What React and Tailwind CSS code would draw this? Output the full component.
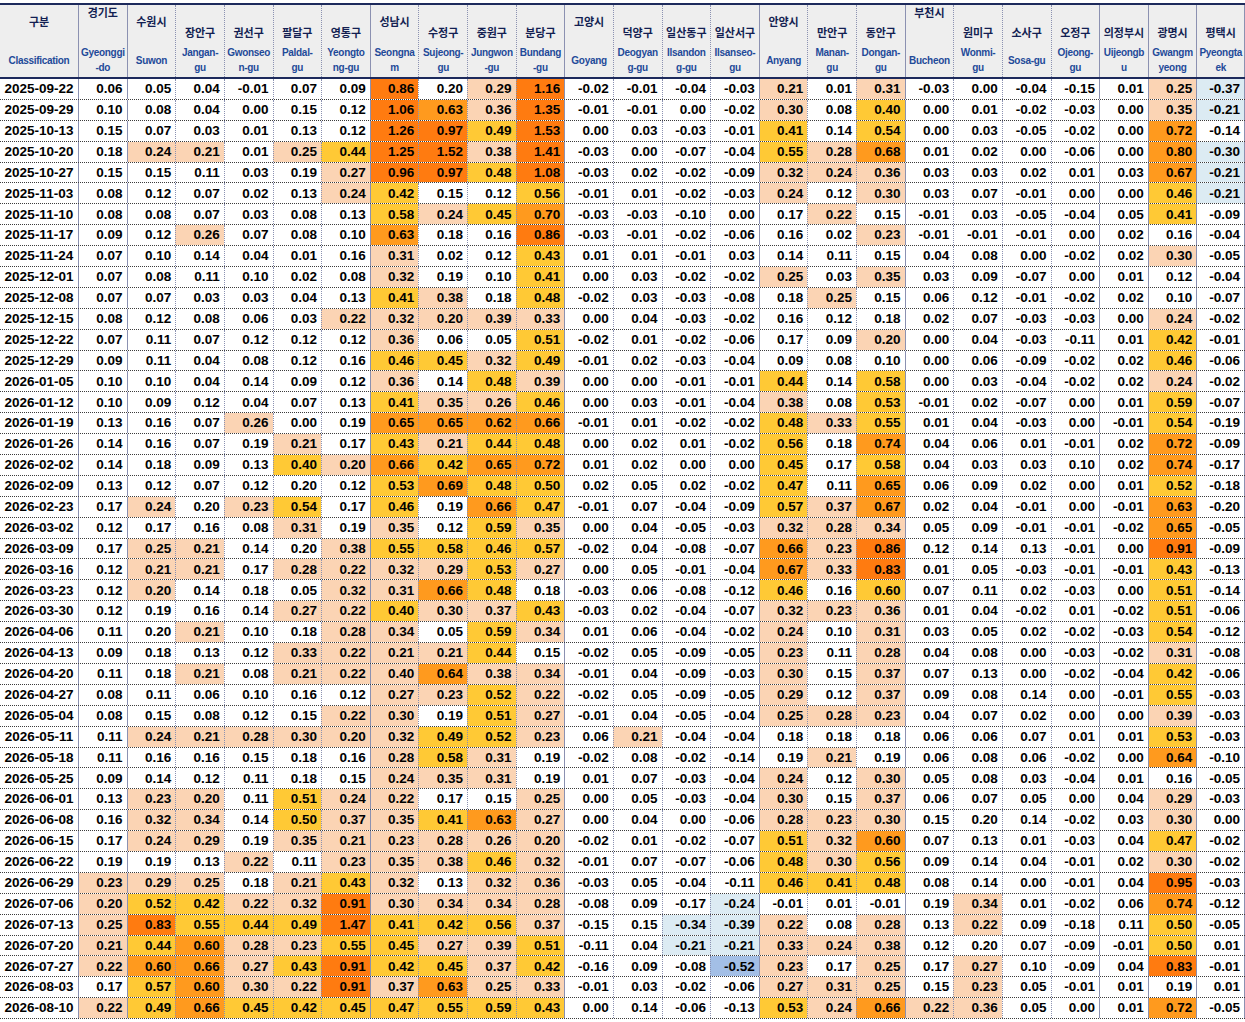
import clsx from 'clsx'

// header: Korean name, English lines, and where the Korean name sits (a = top, b = middle, c = low)
const COLS = [
  { k: '경기도', e: ['Gyeonggi', '-do'], t: 'a', city: true },
  { k: '수원시', e: ['Suwon'], t: 'b', city: true },
  { k: '장안구', e: ['Jangan-', 'gu'], t: 'c' },
  { k: '권선구', e: ['Gwonseo', 'n-gu'], t: 'c' },
  { k: '팔달구', e: ['Paldal-', 'gu'], t: 'c' },
  { k: '영통구', e: ['Yeongto', 'ng-gu'], t: 'c' },
  { k: '성남시', e: ['Seongna', 'm'], t: 'b', city: true },
  { k: '수정구', e: ['Sujeong-', 'gu'], t: 'c' },
  { k: '중원구', e: ['Jungwon', '-gu'], t: 'c' },
  { k: '분당구', e: ['Bundang', '-gu'], t: 'c' },
  { k: '고양시', e: ['Goyang'], t: 'b', city: true },
  { k: '덕양구', e: ['Deogyan', 'g-gu'], t: 'c' },
  { k: '일산동구', e: ['Ilsandon', 'g-gu'], t: 'c' },
  { k: '일산서구', e: ['Ilsanseo-', 'gu'], t: 'c' },
  { k: '안양시', e: ['Anyang'], t: 'b', city: true },
  { k: '만안구', e: ['Manan-', 'gu'], t: 'c' },
  { k: '동안구', e: ['Dongan-', 'gu'], t: 'c' },
  { k: '부천시', e: ['Bucheon'], t: 'a', city: true },
  { k: '원미구', e: ['Wonmi-', 'gu'], t: 'c' },
  { k: '소사구', e: ['Sosa-gu'], t: 'c' },
  { k: '오정구', e: ['Ojeong-', 'gu'], t: 'c' },
  { k: '의정부시', e: ['Uijeongb', 'u'], t: 'c', city: true },
  { k: '광명시', e: ['Gwangm', 'yeong'], t: 'c', city: true },
  { k: '평택시', e: ['Pyeongta', 'ek'], t: 'c', city: true },
]

const KTOP = { a: 'mt-[1px]', b: 'mt-[10px]', c: 'mt-[21px]' }

// "^" marks a cell that the sheet coloured one step lighter than its rounded value says
const ROWS = [
  ['2025-09-22', '0.06 0.05 0.04 -0.01 0.07 0.09 0.86 0.20^ 0.29 1.16 -0.02 -0.01 -0.04 -0.03 0.21 0.01 0.31 -0.03 0.00 -0.04 -0.15 0.01 0.25 -0.37'],
  ['2025-09-29', '0.10 0.08 0.04 0.00 0.15 0.12 1.06 0.63 0.36 1.35 -0.01 -0.01 0.00 -0.02 0.30 0.08 0.40 0.00 0.01 -0.02 -0.03 0.00 0.35 -0.21'],
  ['2025-10-13', '0.15 0.07 0.03 0.01 0.13 0.12 1.26 0.97 0.49 1.53 0.00 0.03 -0.03 -0.01 0.41 0.14 0.54 0.00 0.03 -0.05 -0.02 0.00 0.72 -0.14'],
  ['2025-10-20', '0.18 0.24 0.21 0.01 0.25 0.44 1.25 1.52 0.38 1.41 -0.03 0.00 -0.07 -0.04 0.55 0.28 0.68 0.01 0.02 0.00 -0.06 0.00 0.80^ -0.30'],
  ['2025-10-27', '0.15 0.15 0.11 0.03 0.19 0.27 0.96 0.97 0.48 1.08 -0.03 0.02 -0.02 -0.09 0.32 0.24 0.36 0.03 0.03 0.02 0.01 0.03 0.67 -0.21'],
  ['2025-11-03', '0.08 0.12 0.07 0.02 0.13 0.24 0.42 0.15 0.12 0.56 -0.01 0.01 -0.02 -0.03 0.24 0.12 0.30 0.03 0.07 -0.01 0.00 0.00 0.46 -0.21'],
  ['2025-11-10', '0.08 0.08 0.07 0.03 0.08 0.13 0.58 0.24 0.45 0.70 -0.03 -0.03 -0.10 0.00 0.17 0.22 0.15 -0.01 0.03 -0.05 -0.04 0.05 0.41 -0.09'],
  ['2025-11-17', '0.09 0.12 0.26 0.07 0.08 0.10 0.63 0.18 0.16 0.86 -0.03 -0.01 -0.02 -0.06 0.16 0.02 0.23 -0.01 -0.01 -0.01 0.00 0.02 0.16 -0.04'],
  ['2025-11-24', '0.07 0.10 0.14 0.04 0.01 0.16 0.31 0.02 0.12 0.43 0.01 0.01 -0.01 0.03 0.14 0.11 0.15 0.04 0.08 0.00 -0.02 0.02 0.30 -0.05'],
  ['2025-12-01', '0.07 0.08 0.11 0.10 0.02 0.08 0.32 0.19 0.10 0.41 0.00 0.03 -0.02 -0.02 0.25 0.03 0.35 0.03 0.09 -0.07 0.00 0.01 0.12 -0.04'],
  ['2025-12-08', '0.07 0.07 0.03 0.03 0.04 0.13 0.41 0.38 0.18 0.48 -0.02 0.03 -0.03 -0.08 0.18 0.25 0.15 0.06 0.12 -0.01 -0.02 0.02 0.10 -0.07'],
  ['2025-12-15', '0.08 0.12 0.08 0.06 0.03 0.22 0.32 0.20 0.39 0.33 0.00 0.04 -0.03 -0.02 0.16 0.12 0.18 0.02 0.07 -0.03 -0.03 0.00 0.24 -0.02'],
  ['2025-12-22', '0.07 0.11 0.07 0.12 0.12 0.12 0.36 0.06 0.05 0.51 -0.02 0.01 -0.02 -0.06 0.17 0.09 0.20 0.00 0.04 -0.03 -0.11 0.01 0.42 -0.01'],
  ['2025-12-29', '0.09 0.11 0.04 0.08 0.12 0.16 0.46 0.45 0.32 0.49 -0.01 0.02 -0.03 -0.04 0.09 0.08 0.10 0.00 0.06 -0.09 -0.02 0.02 0.46 -0.06'],
  ['2026-01-05', '0.10 0.10 0.04 0.14 0.09 0.12 0.36 0.14 0.48 0.39 0.00 0.00 -0.01 -0.01 0.44 0.14 0.58 0.00 0.03 -0.04 -0.02 0.02 0.24 -0.02'],
  ['2026-01-12', '0.10 0.09 0.12 0.04 0.07 0.13 0.41 0.35 0.26 0.46 0.00 0.03 -0.01 -0.04 0.38 0.08 0.53 -0.01 0.02 -0.07 0.00 0.01 0.59 -0.07'],
  ['2026-01-19', '0.13 0.16 0.07 0.26 0.00 0.19 0.65 0.65 0.62 0.66 -0.01 0.01 -0.02 -0.02 0.48 0.33 0.55 0.01 0.04 -0.03 0.00 -0.01 0.54 -0.19'],
  ['2026-01-26', '0.14 0.16 0.07 0.19 0.21 0.17 0.43 0.21 0.44 0.48 0.00 0.02 0.01 -0.02 0.56 0.18 0.74 0.04 0.06 0.01 -0.01 0.02 0.72 -0.09'],
  ['2026-02-02', '0.14 0.18 0.09 0.13 0.40 0.20 0.66 0.42 0.65 0.72 0.01 0.02 0.00 0.00 0.45 0.17 0.58 0.04 0.03 0.03 0.10 0.02 0.74 -0.17'],
  ['2026-02-09', '0.13 0.12 0.07 0.12 0.20^ 0.12 0.53 0.69 0.48 0.50 0.02 0.05 0.02 -0.02 0.47 0.11 0.65 0.06 0.09 0.02 0.00 0.01 0.52 -0.18'],
  ['2026-02-23', '0.17 0.24 0.20^ 0.23 0.54 0.17 0.46 0.19 0.66 0.47 -0.01 0.07 -0.04 -0.09 0.57 0.37 0.67 0.02 0.04 -0.01 0.00 -0.01 0.63 -0.20'],
  ['2026-03-02', '0.12 0.17 0.16 0.08 0.31 0.19 0.35 0.12 0.59 0.35 0.00 0.04 -0.05 -0.03 0.32 0.28 0.34 0.05 0.09 -0.01 -0.01 -0.02 0.65 -0.05'],
  ['2026-03-09', '0.17 0.25 0.21 0.14 0.20^ 0.38 0.55 0.58 0.46 0.57 -0.02 0.04 -0.08 -0.07 0.66 0.23 0.86 0.12 0.14 0.13 -0.01 0.00 0.91 -0.09'],
  ['2026-03-16', '0.12 0.21 0.21 0.17 0.28 0.22 0.32 0.29 0.53 0.27 0.00 0.05 -0.01 -0.04 0.67 0.33 0.83 0.01 0.05 -0.03 -0.01 -0.01 0.43 -0.13'],
  ['2026-03-23', '0.12 0.20 0.14 0.18 0.05 0.32 0.31 0.66 0.48 0.18 -0.03 0.06 -0.08 -0.12 0.46 0.16 0.60^ 0.07 0.11 0.02 -0.03 0.00 0.51 -0.14'],
  ['2026-03-30', '0.12 0.19 0.16 0.14 0.27 0.22 0.40 0.30 0.37 0.43 -0.03 0.02 -0.04 -0.07 0.32 0.23 0.36 0.01 0.04 -0.02 0.01 -0.02 0.51 -0.06'],
  ['2026-04-06', '0.11 0.20^ 0.21 0.10 0.18 0.28 0.34 0.05 0.59 0.34 0.01 0.06 -0.04 -0.02 0.24 0.10 0.31 0.03 0.05 0.02 -0.02 -0.03 0.54 -0.12'],
  ['2026-04-13', '0.09 0.18 0.13 0.12 0.33 0.22 0.21 0.21 0.44 0.15 -0.02 0.05 -0.09 -0.05 0.23 0.11 0.28 0.04 0.08 0.00 -0.03 -0.02 0.31 -0.08'],
  ['2026-04-20', '0.11 0.18 0.21 0.08 0.21 0.22 0.40^ 0.64 0.38 0.34 -0.01 0.04 -0.09 -0.03 0.30 0.15 0.37 0.07 0.13 0.00 -0.02 -0.04 0.42 -0.06'],
  ['2026-04-27', '0.08 0.11 0.06 0.10 0.16 0.12 0.27 0.23 0.52 0.22 -0.02 0.05 -0.09 -0.05 0.29 0.12 0.37 0.09 0.08 0.14 0.00 -0.01 0.55 -0.03'],
  ['2026-05-04', '0.08 0.15 0.08 0.12 0.15 0.22 0.30 0.19 0.51 0.27 -0.01 0.04 -0.05 -0.04 0.25 0.28 0.23 0.04 0.07 0.02 0.00 0.00 0.39 -0.03'],
  ['2026-05-11', '0.11 0.24 0.21 0.28 0.30 0.20 0.32 0.49 0.52 0.23 0.06 0.21 -0.04 -0.04 0.18 0.18 0.18 0.06 0.06 0.07 0.01 0.01 0.53 -0.03'],
  ['2026-05-18', '0.11 0.16 0.16 0.15 0.18 0.16 0.28 0.58 0.31 0.19 -0.02 0.08 -0.02 -0.14 0.19 0.21 0.19 0.06 0.08 0.06 -0.02 0.00 0.64 -0.10'],
  ['2026-05-25', '0.09 0.14 0.12 0.11 0.18 0.15 0.24 0.35 0.31 0.19 0.01 0.07 -0.03 -0.04 0.24 0.12 0.30 0.05 0.08 0.03 -0.04 0.01 0.16 -0.05'],
  ['2026-06-01', '0.13 0.23 0.20 0.11 0.51 0.24 0.22 0.17 0.15 0.25 0.00 0.05 -0.03 -0.04 0.30 0.15 0.37 0.06 0.07 0.05 0.00 0.04 0.29 -0.03'],
  ['2026-06-08', '0.16 0.32 0.34 0.14 0.50 0.37 0.35 0.41 0.63 0.27 0.00 0.04 0.00 -0.06 0.28 0.23 0.30 0.15 0.20^ 0.14 -0.02 0.03 0.30 0.00'],
  ['2026-06-15', '0.17 0.24 0.29 0.19 0.35 0.21 0.23 0.28 0.26 0.20 -0.02 0.01 -0.02 -0.07 0.51 0.32 0.60 0.07 0.13 0.01 -0.03 0.04 0.47 -0.02'],
  ['2026-06-22', '0.19 0.19 0.13 0.22 0.11 0.23 0.35 0.38 0.46 0.32 -0.01 0.07 -0.07 -0.06 0.48 0.30 0.56 0.09 0.14 0.04 -0.01 0.02 0.30 -0.02'],
  ['2026-06-29', '0.23 0.29 0.25 0.18 0.21 0.43 0.32 0.13 0.32 0.36 -0.03 0.05 -0.04 -0.11 0.46 0.41 0.48 0.08 0.14 0.00 -0.01 0.04 0.95 -0.03'],
  ['2026-07-06', '0.20 0.52 0.42 0.22 0.32 0.91 0.30 0.34 0.34 0.28 -0.08 0.09 -0.17 -0.24 -0.01 0.01 -0.01 0.19 0.34 0.01 -0.02 0.06 0.74 -0.12'],
  ['2026-07-13', '0.25 0.83 0.55 0.44 0.49 1.47 0.41 0.42 0.56 0.37 -0.15 0.15 -0.34 -0.39 0.22 0.08 0.28 0.13 0.22 0.09 -0.18 0.11 0.50 -0.05'],
  ['2026-07-20', '0.21 0.44 0.60 0.28 0.23 0.55 0.45 0.27 0.39 0.51 -0.11 0.04 -0.21 -0.21 0.33 0.24 0.38 0.12 0.20^ 0.07 -0.09 -0.01 0.50 0.01'],
  ['2026-07-27', '0.22 0.60 0.66 0.27 0.43 0.91 0.42 0.45 0.37 0.42 -0.16 0.09 -0.08 -0.52 0.23 0.17 0.25 0.17 0.27 0.10 -0.09 0.04 0.83 -0.01'],
  ['2026-08-03', '0.17 0.57 0.60 0.30 0.22 0.91 0.37 0.63 0.25 0.33 -0.01 0.03 -0.02 -0.06 0.27 0.31 0.25 0.15 0.23 0.05 -0.01 0.01 0.19 0.01'],
  ['2026-08-10', '0.22 0.49 0.66 0.45 0.42 0.45 0.47 0.55 0.59 0.43 0.00 0.14 -0.06 -0.13 0.53 0.24 0.66 0.22 0.36 0.05 0.00 0.01 0.72 -0.05'],
]

const FILL = {
  '-2': 'bg-[#a3bfe6]',
  '-1': 'bg-[#dcebf3]',
  0: 'bg-white',
  1: 'bg-[#fbd4b4]',
  2: 'bg-[#ffc935]',
  3: 'bg-[#ff9a1e]',
  4: 'bg-[#ff7b10]',
}

function level(s) {
  const v = parseFloat(s)
  if (v <= -0.45) return -2
  if (v <= -0.205) return -1
  let n = v >= 0.795 ? 4 : v >= 0.595 ? 3 : v >= 0.395 ? 2 : v >= 0.195 ? 1 : 0
  if (s.endsWith('^')) n -= 1
  return n
}

const GRID = 'grid grid-cols-[78px_repeat(24,minmax(0,1fr))]'
const FONT = "font-['Liberation_Sans','Noto_Sans_CJK_KR',sans-serif]"

function HeadCell({ k, e, t, city, first, last }) {
  return (
    <div
      className={clsx(
        'flex flex-col items-center h-full min-w-0',
        !first && 'border-l border-[#8b91b1]',
        !first && (city ? 'border-solid' : 'border-dotted'),
        last && 'border-r border-solid border-[#8b91b1]'
      )}
    >
      <div className={clsx('text-[11px] leading-[14px] font-bold text-[#131f52] whitespace-nowrap', KTOP[t])}>{k}</div>
      <div className="mt-auto mb-[1px] h-[32px] flex flex-col justify-center items-center text-[10px] leading-[15px] font-bold text-[#1f4a99] whitespace-nowrap tracking-[-0.3px]">
        {e.map((l) => (
          <span key={l}>{l}</span>
        ))}
      </div>
    </div>
  )
}

export default function App() {
  return (
    <div className={clsx('w-[1245px] h-[1022px] bg-white overflow-hidden pt-[3px] text-black', FONT)}>
      {/* header */}
      <div className={clsx(GRID, 'h-[76px] bg-[#eeeeee] border-t-2 border-b-2 border-[#1d2a5c]')}>
        <HeadCell k="구분" e={['Classification']} t="b" first />
        {COLS.map((c, i) => (
          <HeadCell key={c.k} {...c} last={i === COLS.length - 1} />
        ))}
      </div>

      {/* weekly rows */}
      {ROWS.map(([date, line]) => (
        <div key={date} className={clsx(GRID, 'h-[20.9px] border-b border-dotted border-[#3c3c3c]')}>
          <div className="flex items-center justify-center text-[13.5px] font-bold leading-none">{date}</div>
          {line.split(' ').map((s, i) => (
            <div
              key={i}
              className={clsx(
                'flex items-center justify-end pr-[4px] text-[13.5px] font-bold leading-none border-l border-[#8b91b1] min-w-0',
                COLS[i].city ? 'border-solid' : 'border-dotted',
                i === 23 && 'border-r',
                FILL[level(s)]
              )}
            >
              {s.replace('^', '')}
            </div>
          ))}
        </div>
      ))}
    </div>
  )
}
